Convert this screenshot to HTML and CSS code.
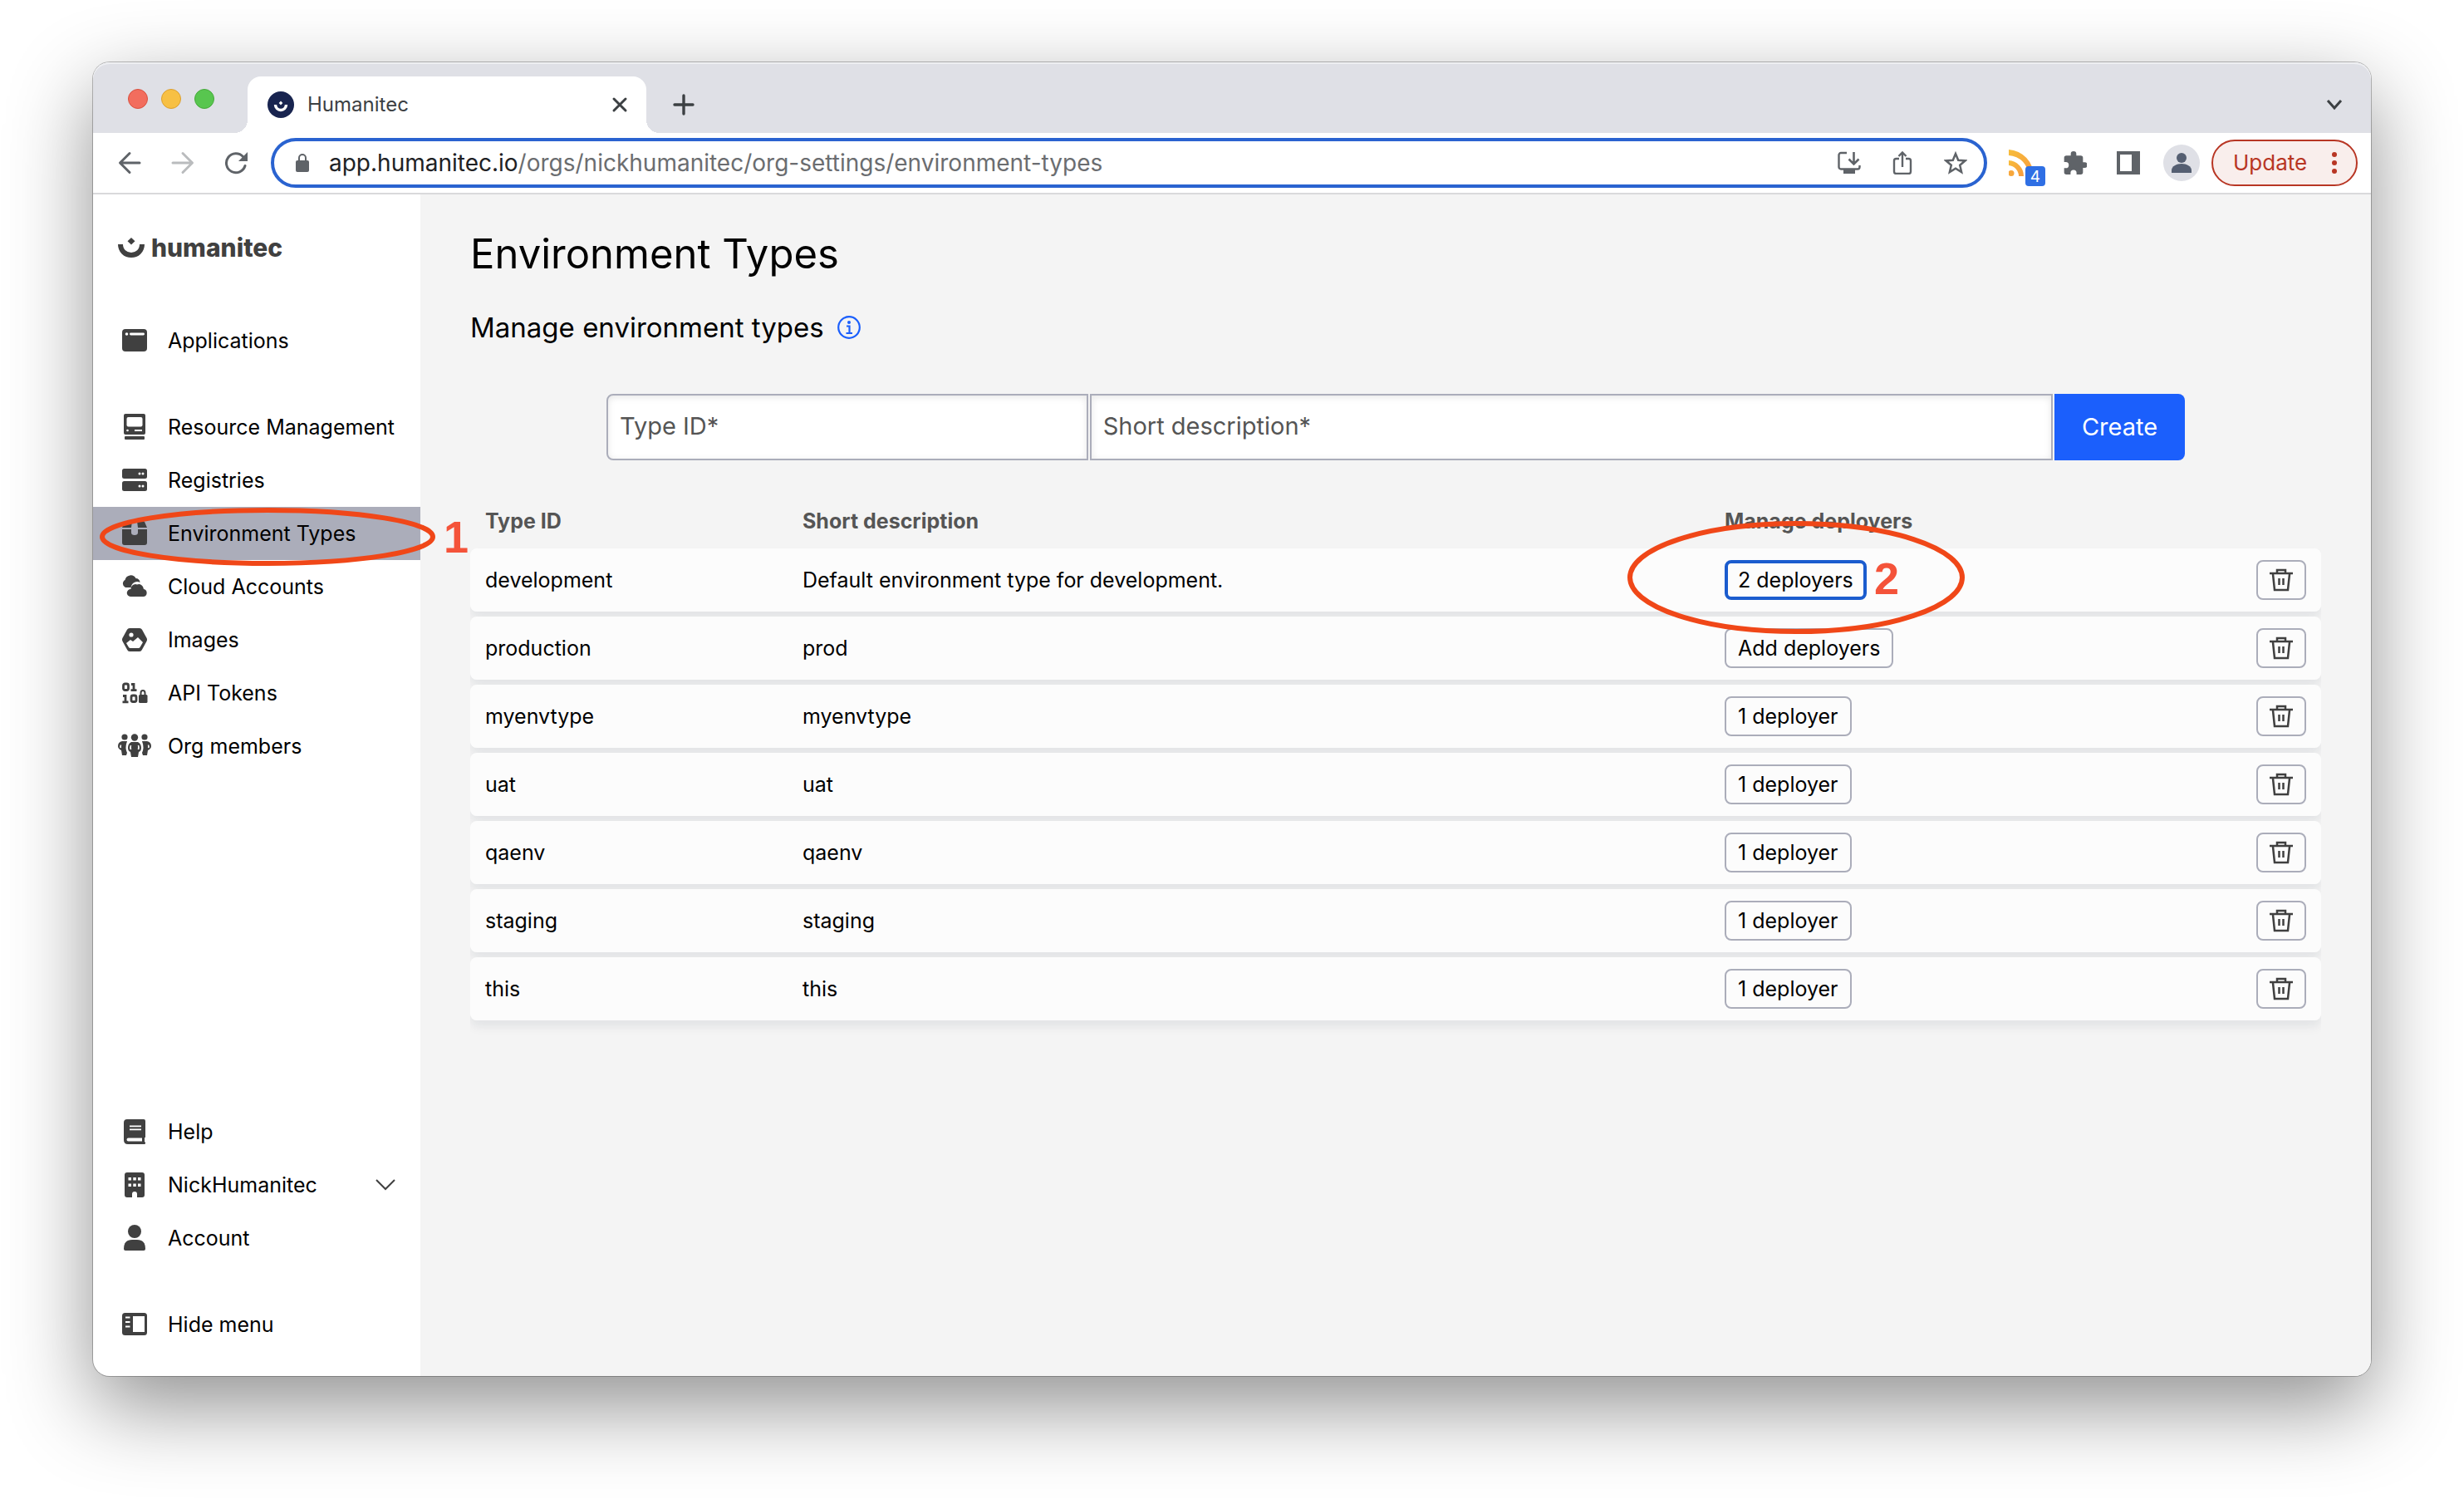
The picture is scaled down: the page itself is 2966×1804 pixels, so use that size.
FILE: index.html
```html
<!DOCTYPE html>
<html lang="en">
<head>
<meta charset="utf-8">
<title>Humanitec</title>
<link rel="stylesheet" href="styles.css">
</head>
<body>
<svg class="sprite" aria-hidden="true">
  <symbol id="trash" viewBox="0 0 28 28"><path d="M0 6h28M9 6V2h10v4M4 7l2 19h16l2-19M11.500 12v8M16.500 12v8" fill="none" stroke="#404040" stroke-width="2.500"/></symbol>
</svg>
<div class="window">
  <header class="tabstrip">
    <div class="lights">
      <button class="light close" aria-label="Close window"></button>
      <button class="light minimise" aria-label="Minimise window"></button>
      <button class="light zoom" aria-label="Zoom window"></button>
    </div>
    <div class="tab">
      <svg class="favicon" viewBox="0 0 32 32"><circle cx="16" cy="16" r="16" fill="#18244f"/><path d="M9.500 16a6.500 6.500 0 0 0 13 0" fill="none" stroke="#fff" stroke-width="3.400"/><path d="M16 11.500l2.300 2.500-2.300 2.500-2.300-2.500z" fill="#fff"/></svg>
      <span class="tab-title">Humanitec</span>
      <button class="icon-btn" aria-label="Close tab"><svg width="20" height="20" viewBox="0 0 20 20"><path d="M3 3l14 14M17 3L3 17" stroke="#3c4043" stroke-width="3" stroke-linecap="round"/></svg></button>
    </div>
    <button class="icon-btn new-tab" aria-label="New tab"><svg width="26" height="26" viewBox="0 0 26 26"><path d="M13 2v22M2 13h22" stroke="#3c4043" stroke-width="3.400" stroke-linecap="round"/></svg></button>
    <button class="icon-btn tab-search" aria-label="Search tabs"><svg width="20" height="20" viewBox="0 0 20 20"><path d="M2 5l8 9 8-9" fill="none" stroke="#3c4043" stroke-width="3"/></svg></button>
  </header>

  <div class="toolbar">
    <div class="history">
      <button class="icon-btn" aria-label="Back"><svg width="28" height="28" viewBox="0 0 28 28"><path d="M26 14H3M14 2.500L2.500 14 14 25.500" fill="none" stroke="#5f6368" stroke-width="3" stroke-linecap="round" stroke-linejoin="round"/></svg></button>
      <button class="icon-btn" aria-label="Forward" disabled><svg width="28" height="28" viewBox="0 0 28 28"><path d="M2 14h23M14 2.500L25.500 14 14 25.500" fill="none" stroke="#babcbe" stroke-width="3" stroke-linecap="round" stroke-linejoin="round"/></svg></button>
      <button class="icon-btn" aria-label="Reload"><svg width="28" height="28" viewBox="0 0 28 28"><path d="M25 17.500A11.500 11.500 0 1 1 22.500 6.500" fill="none" stroke="#5f6368" stroke-width="3" stroke-linecap="round"/><path d="M28 1v11H17z" fill="#5f6368"/></svg></button>
    </div>
    <div class="omnibox">
      <svg width="16" height="22" viewBox="0 0 16 22"><rect y="8" width="16" height="14" rx="2" fill="#5f6368"/><path d="M4 9V5a4 4 0 0 1 8 0v4" fill="none" stroke="#5f6368" stroke-width="2"/></svg>
      <div class="url" role="textbox" contenteditable="true" spellcheck="false" aria-label="Address"><span class="host">app.humanitec.io</span>/orgs/nickhumanitec/org-settings/environment-types</div>
      <button class="icon-btn" aria-label="Install app"><svg width="28" height="28" viewBox="0 0 28 28"><path d="M11 2H4a2.500 2.500 0 0 0-2.500 2.500V19A2.500 2.500 0 0 0 4 21.500h20a2.500 2.500 0 0 0 2.500-2.500v-2" fill="none" stroke="#5f6368" stroke-width="2.400"/><path d="M7 22h14v5H7z" fill="#5f6368"/><path d="M19.500 1v14M13.500 9.500l6 6 6-6" fill="none" stroke="#5f6368" stroke-width="2.600"/></svg></button>
      <button class="icon-btn" aria-label="Share"><svg width="28" height="28" viewBox="0 0 28 28"><path d="M10 9H6.500A2.500 2.500 0 0 0 4 11.500v13A2.500 2.500 0 0 0 6.500 27h15a2.500 2.500 0 0 0 2.500-2.500v-13A2.500 2.500 0 0 0 21.500 9H18M14 19V2M9.500 6L14 1.500 18.500 6" fill="none" stroke="#5f6368" stroke-width="2.400"/></svg></button>
      <button class="icon-btn" aria-label="Bookmark"><svg width="28" height="28" viewBox="0 0 28 28"><path d="M14 3l3.200 7.700 8.300.700-6.300 5.400 1.900 8.200-7.100-4.400L6.900 25l1.900-8.200-6.300-5.400 8.300-.7z" fill="none" stroke="#5f6368" stroke-width="2.500"/></svg></button>
    </div>
    <div class="extensions">
      <button class="icon-btn feed" aria-label="Feed reader"><svg width="30" height="32" viewBox="0 0 30 32"><defs><linearGradient id="rss" x1="0" y1="0" x2="1" y2="1"><stop offset="0" stop-color="#f7bd3b"/><stop offset="1" stop-color="#f79a3e"/></linearGradient></defs><path d="M0 0a32 32 0 0 1 30 32h-6A25 25 0 0 0 0 7z" fill="url(#rss)"/><path d="M0 13a19 19 0 0 1 18 19h-6A13 13 0 0 0 0 19z" fill="url(#rss)"/><circle cx="3" cy="28.500" r="3.500" fill="#f7a73c"/></svg><span class="badge">4</span></button>
      <button class="icon-btn" aria-label="Extensions"><svg width="28" height="28" viewBox="1.500 1 21 21"><path d="M20.500 11H19V7a2 2 0 0 0-2-2h-4V3.500a2.500 2.500 0 0 0-5 0V5H4a2 2 0 0 0-2 2v3.800h1.500a2.700 2.700 0 0 1 0 5.400H2V20a2 2 0 0 0 2 2h3.800v-1.500a2.700 2.700 0 0 1 5.400 0V22H17a2 2 0 0 0 2-2v-4h1.500a2.500 2.500 0 0 0 0-5z" fill="#5f6368"/></svg></button>
      <button class="icon-btn" aria-label="Side panel"><svg width="28" height="28" viewBox="0 0 28 28"><path d="M0 0h28v28H0zM4 4v20h14V4z" fill="#5f6368" fill-rule="evenodd"/></svg></button>
      <button class="icon-btn avatar" aria-label="Profile"><svg width="44" height="44" viewBox="0 0 44 44"><circle cx="22" cy="22" r="22" fill="#dfe0e6"/><circle cx="22" cy="16" r="6" fill="#555f72"/><path d="M10 34v-3c0-5 6-8 12-8s12 3 12 8v3z" fill="#555f72"/></svg></button>
      <button class="update">Update <svg width="8" height="28" viewBox="0 0 8 28"><g fill="#b83624"><circle cx="4" cy="4" r="3"/><circle cx="4" cy="14" r="3"/><circle cx="4" cy="24" r="3"/></g></svg></button>
    </div>
  </div>

  <div class="app">
    <nav class="sidebar" aria-label="Main">
      <a class="brand" href="#"><svg width="32" height="24" viewBox="0 0 32 24"><path d="M3 8c0 8 6 13 13 13s13-5 13-13" fill="none" stroke="#404040" stroke-width="6"/><path d="M16 0l4.500 4.300L16 8.600l-4.500-4.300z" fill="#404040"/></svg><span>humanitec</span></a>

      <a class="nav-item" href="#"><svg class="nav-icon" viewBox="0 0 40 32"><rect x="5" y="2" width="30" height="27" rx="4"/><circle cx="10.500" cy="8" r="1.800" fill="#fff"/><rect x="14" y="6.600" width="18" height="2.800" rx="1.400" fill="#fff"/></svg>Applications</a>

      <div class="nav-group">
        <a class="nav-item" href="#"><svg class="nav-icon" viewBox="0 0 40 32"><rect x="7" y="0" width="26" height="25" rx="2"/><rect x="10.500" y="4" width="19" height="11.500" rx="2" fill="#fff"/><circle cx="11.500" cy="20" r="1.300" fill="#fff"/><path d="M20 19h9v2h-9z" fill="#fff"/><rect x="8" y="27" width="24" height="4" rx="1"/></svg>Resource Management</a>
        <a class="nav-item" href="#"><svg class="nav-icon" viewBox="0 0 40 32"><rect x="5" y="2" width="30" height="12" rx="2.500"/><rect x="5" y="17" width="30" height="12" rx="2.500"/><g fill="#fff"><circle cx="26" cy="8" r="1.500"/><circle cx="30" cy="8" r="1.500"/><circle cx="26" cy="23" r="1.500"/><circle cx="30" cy="23" r="1.500"/></g></svg>Registries</a>
        <a class="nav-item active" href="#" aria-current="page"><svg class="nav-icon" viewBox="0 0 40 32"><path d="M10 1h7l-1 8H5l3-7zM30 1h-7l1 8h11l-3-7zM5 11h11v4q0 3 4 3t4-3v-4h11v16q0 3-3 3H8q-3 0-3-3z"/></svg>Environment Types
          <svg class="ring ring-nav" viewBox="0 0 404 70"><ellipse cx="202" cy="35" rx="199" ry="32"/></svg><span class="step step-nav">1</span></a>
        <a class="nav-item" href="#"><svg class="nav-icon" viewBox="0 0 40 32"><path d="M9 17a5 5 0 0 1-.5-9 7 7 0 0 1 13-2 5 5 0 0 1 5 5q-3-2-7 0-3 1.500-4 6z"/><path d="M15 28a4.500 4.500 0 0 1 .5-9A5.500 5.500 0 0 1 23 13.500 6 6 0 0 1 31 19a4.600 4.600 0 0 1 0 9z"/></svg>Cloud Accounts</a>
        <a class="nav-item" href="#"><svg class="nav-icon" viewBox="0 0 40 32"><path d="M14 2h12q2 0 3 1.800l5.500 10q1 2 0 4l-5.500 10Q28 30 26 30H14q-2 0-3-2.200l-5.500-10q-1-2 0-4l5.500-10Q12 2 14 2z"/><circle cx="16" cy="10" r="2.600" fill="#fff"/><path d="M10 20l5-4 3 2 6-5 6 6-3.500 6q-.5 1-2 1H15q-1.500 0-2-1z" fill="#fff"/></svg>Images</a>
        <a class="nav-item" href="#"><svg class="nav-icon" viewBox="0 0 40 32"><g fill="none" stroke="#404040" stroke-width="2.800"><rect x="6.500" y="5" width="6" height="7.500" rx="2"/><path d="M16 5.500h3v7M15.500 12.700h7M6 19.500h3v7M5.500 26.800h7"/><rect x="16" y="19" width="6" height="7.500" rx="2"/><path d="M27.500 20v-4q0-3 2.500-3t2.500 3v4" stroke-width="2"/></g><rect x="25" y="18" width="10.500" height="10" rx="1.500"/></svg>API Tokens</a>
        <a class="nav-item" href="#"><svg class="nav-icon" viewBox="0 0 40 32"><circle cx="8" cy="5" r="3.600"/><circle cx="32" cy="5" r="3.600"/><circle cx="20" cy="5.500" r="4.200"/><path d="M5 10h6q-3 8 0 14l-1 3H5l-1-6q-4-2-4-5 0-5 5-6zM35 10h-6q3 8 0 14l1 3h5l1-6q4-2 4-5 0-5-5-6zM16 11h8q4 2 4 7 0 4-3 5l-1 6h-8l-1-6q-3-1-3-5 0-5 4-7z"/><path d="M3.500 14.500q-1 2 0 3.500M36.500 14.500q1 2 0 3.500M15.500 15q-1 2.500 0 5M24.500 15q1 2.500 0 5" fill="none" stroke="#fff" stroke-width="1.600"/></svg>Org members</a>
      </div>

      <div class="nav-bottom">
        <a class="nav-item" href="#"><svg class="nav-icon" viewBox="0 0 40 32"><path d="M11 1h20q2 0 2 2v20h-1v5q1 0 1 1.500T32 31H12q-5 0-5-5V5q0-4 4-4z"/><path d="M14 8.500h14v1.800H14zM14 12.500h14v1.800H14zM12.500 23.500H29v4H12.500q-2 0-2-2t2-2z" fill="#fff"/></svg>Help</a>
        <button class="nav-item" aria-expanded="false"><svg class="nav-icon" viewBox="0 0 40 32"><rect x="8" y="1" width="24" height="30" rx="3"/><path d="M12.500 7h3.500v3.500h-3.500zM18.300 7h3.500v3.500h-3.500zM24 7h3.500v3.500H24zM12.500 14.500h3.500V18h-3.500zM18.300 14.500h3.500V18h-3.500zM24 14.500h3.500V18H24zM17 31v-4q0-3 3-3t3 3v4z" fill="#fff"/></svg>NickHumanitec
          <svg class="caret" width="24" height="16" viewBox="0 0 24 16"><path d="M1 2l11 11L23 2" fill="none" stroke="#404040" stroke-width="2"/></svg></button>
        <a class="nav-item" href="#"><svg class="nav-icon" viewBox="0 0 40 32"><circle cx="20" cy="8" r="8"/><path d="M7 29q0-11 10-11h6q10 0 10 11 0 2-2 2H9q-2 0-2-2z"/></svg>Account</a>
      </div>
      <button class="nav-item hide-menu"><svg class="nav-icon" viewBox="0 0 40 32"><rect x="5" y="2" width="30" height="27" rx="3.500"/><path d="M18 6h14v19H18zM9 6.500h5.500v2H9zM9 12h5.500v2H9zM9 17.500h5.500v2H9z" fill="#fff"/></svg>Hide menu</button>
    </nav>

    <main class="main">
      <h1>Environment Types</h1>
      <h2>Manage environment types <svg width="28" height="28" viewBox="0 0 28 28"><g fill="none" stroke="#1b5ffc"><circle cx="14" cy="14" r="12.800" stroke-width="2.200"/><path d="M11 12.500h3.500V21M10.500 21h7.500" stroke-width="2.200"/></g><circle cx="14" cy="8" r="2" fill="#1b5ffc"/></svg></h2>
      <form class="create">
        <input class="field first" type="text" placeholder="Type ID*" aria-label="Type ID">
        <input class="field" type="text" placeholder="Short description*" aria-label="Short description">
        <button class="submit" type="button">Create</button>
      </form>
      <div class="table-wrap">
      <table>
        <colgroup><col class="c-id"><col><col class="c-deployers"><col class="c-actions"></colgroup>
        <thead><tr><th scope="col">Type ID</th><th scope="col">Short description</th><th scope="col">Manage deployers</th><td></td></tr></thead>
        <tbody>
          <tr><td>development</td><td>Default environment type for development.</td><td class="marked"><button class="chip focused">2 deployers</button><svg class="ring ring-cell" viewBox="0 0 406 136"><ellipse cx="203" cy="68" rx="200" ry="65"/></svg><span class="step step-cell">2</span></td><td><button class="chip del" aria-label="Delete development"><svg><use href="#trash"/></svg></button></td></tr>
          <tr><td>production</td><td>prod</td><td><button class="chip">Add deployers</button></td><td><button class="chip del" aria-label="Delete production"><svg><use href="#trash"/></svg></button></td></tr>
          <tr><td>myenvtype</td><td>myenvtype</td><td><button class="chip">1 deployer</button></td><td><button class="chip del" aria-label="Delete myenvtype"><svg><use href="#trash"/></svg></button></td></tr>
          <tr><td>uat</td><td>uat</td><td><button class="chip">1 deployer</button></td><td><button class="chip del" aria-label="Delete uat"><svg><use href="#trash"/></svg></button></td></tr>
          <tr><td>qaenv</td><td>qaenv</td><td><button class="chip">1 deployer</button></td><td><button class="chip del" aria-label="Delete qaenv"><svg><use href="#trash"/></svg></button></td></tr>
          <tr><td>staging</td><td>staging</td><td><button class="chip">1 deployer</button></td><td><button class="chip del" aria-label="Delete staging"><svg><use href="#trash"/></svg></button></td></tr>
          <tr><td>this</td><td>this</td><td><button class="chip">1 deployer</button></td><td><button class="chip del" aria-label="Delete this"><svg><use href="#trash"/></svg></button></td></tr>
        </tbody>
      </table>
      </div>
    </main>
  </div>
</div>
</body>
</html>
```
FILE: styles.css
```css
* { box-sizing: border-box; }

body {
  margin: 0;
  min-height: 100vh;
  display: flex;
  padding: 75px 112px 148px;
  background: #fff;
  color: #000;
  font: 25px/32px Inter, "Liberation Sans", sans-serif;
}

button, input { font: inherit; color: inherit; }
svg { display: block; flex: none; }
.sprite { position: absolute; width: 0; height: 0; }

.icon-btn {
  display: flex;
  padding: 0;
  border: 0;
  background: none;
}

/* Browser window */
.window {
  flex: 1;
  display: flex;
  flex-direction: column;
  min-width: 0;
  border-radius: 20px;
  background: #fff;
  box-shadow: 0 0 0 1px rgba(0, 0, 0, .25), 0 36px 100px rgba(0, 0, 0, .44);
}

.tabstrip {
  display: flex;
  align-items: flex-end;
  height: 85px;
  padding: 0 34px 0 42px;
  border-radius: 20px 20px 0 0;
  background: #dfe0e6;
  box-shadow: inset 0 2px 0 #eeeff2;
}
.lights {
  display: flex;
  align-items: center;
  gap: 16px;
  height: 82px;
  margin-right: 40px;
}
.light {
  width: 24px;
  height: 24px;
  padding: 0;
  border: 1px solid;
  border-radius: 50%;
}
.light.close { background: #f26d5e; border-color: #d9503f; }
.light.minimise { background: #f7c044; border-color: #dc9f2e; }
.light.zoom { background: #58c64f; border-color: #45a93a; }

.tab {
  position: relative;
  display: flex;
  align-items: center;
  gap: 16px;
  width: 480px;
  height: 68px;
  padding: 0 22px 0 24px;
  border-radius: 16px 16px 0 0;
  background: #fff;
}
.tab::before, .tab::after {
  content: "";
  position: absolute;
  bottom: 0;
  width: 16px;
  height: 16px;
}
.tab::before { left: -16px; background: radial-gradient(circle at 0 0, transparent 16px, #fff 16px); }
.tab::after { right: -16px; background: radial-gradient(circle at 100% 0, transparent 16px, #fff 16px); }
.favicon { width: 32px; height: 32px; }
.tab-title { flex: 1; font-size: 24px; color: #3c4043; }
.new-tab, .tab-search { height: 68px; align-items: center; }
.new-tab { margin-left: 32px; }
.tab-search { margin-left: auto; }

.toolbar {
  display: flex;
  align-items: center;
  height: 74px;
  padding: 0 16px 0 30px;
  border-bottom: 2px solid #d9d9db;
}
.history { display: flex; gap: 36px; margin-right: 28px; }
.omnibox {
  flex: 1;
  display: flex;
  align-items: center;
  gap: 36px;
  height: 60px;
  padding: 0 20px 0 26px;
  border: 4px solid #2a63d0;
  border-radius: 30px;
}
.url {
  flex: 1;
  margin-left: -12px;
  font-size: 28px;
  color: #6b6d70;
  white-space: nowrap;
}
.host { color: #202124; }
.extensions { display: flex; align-items: center; gap: 36px; margin-left: 26px; }
.feed { position: relative; }
.badge {
  position: absolute;
  left: 20px;
  top: 20px;
  width: 24px;
  height: 24px;
  border-radius: 4px;
  background: #2f6fe4;
  color: #fff;
  font-size: 19px;
  line-height: 25px;
  text-align: center;
}
.avatar { margin: 0 -22px 0 -8px; }
.update {
  display: flex;
  align-items: center;
  justify-content: space-between;
  width: 176px;
  height: 56px;
  padding: 0 22px 0 24px;
  border: 2px solid #b83624;
  border-radius: 28px;
  background: #f9eeec;
  color: #b83624;
  font-size: 26px;
}

/* Application */
.app { flex: 1; display: flex; }

.sidebar {
  position: relative;
  z-index: 1;
  display: flex;
  flex-direction: column;
  width: 394px;
  padding-bottom: 30px;
}
.brand {
  display: flex;
  align-items: center;
  gap: 8px;
  height: 128px;
  margin-bottom: 16px;
  padding-left: 30px;
  color: #404040;
  font-size: 30px;
  font-weight: 800;
  text-decoration: none;
}
.nav-item {
  position: relative;
  display: flex;
  align-items: center;
  gap: 20px;
  width: 100%;
  height: 64px;
  padding: 0 30px;
  border: 0;
  background: none;
  color: #000;
  text-align: left;
  text-decoration: none;
  white-space: nowrap;
}
.nav-item.active { background: #abadba; }
.nav-icon { width: 40px; height: 32px; fill: #404040; }
.nav-group { margin-top: 40px; }
.nav-bottom { margin-top: auto; }
.hide-menu { margin-top: 40px; }
.caret { margin-left: auto; }

.main {
  flex: 1;
  min-width: 0;
  padding: 42px 60px;
  border-radius: 0 0 20px 0;
  background: #f4f4f4;
}
h1 { margin: 0; font-size: 49px; line-height: 60px; font-weight: 400; }
h2 {
  display: flex;
  align-items: center;
  gap: 16px;
  margin: 38px 0 60px;
  font-size: 33px;
  line-height: 40px;
  font-weight: 400;
}

.create {
  display: grid;
  grid-template-columns: 1fr 2fr 157px;
  gap: 2px;
  height: 80px;
  padding: 0 164px;
  font-size: 29px;
}
.field {
  min-width: 0;
  padding: 0 14px 2px;
  border: 2px solid #abadba;
  border-radius: 0;
  background: #fff;
  box-shadow: inset 0 2px 8px rgba(0, 0, 0, .1);
}
.field.first { border-radius: 8px 0 0 8px; }
.field::placeholder { color: #555; opacity: 1; }
.submit {
  padding: 0;
  border: 0;
  border-radius: 0 8px 8px 0;
  background: #1b5ffc;
  color: #fff;
}

.table-wrap { margin-top: 40px; padding-bottom: 24px; clip-path: inset(0); }
table {
  width: 100%;
  table-layout: fixed;
  border-collapse: separate;
  border-spacing: 0 6px;
}
.c-id { width: 382px; }
.c-deployers { width: 640px; }
.c-actions { width: 96px; }
th { height: 54px; padding: 0 18px; color: #555; font-weight: 700; text-align: left; }
thead td { padding: 0; }
tbody tr { border-radius: 8px; box-shadow: 0 8px 12px rgba(20, 35, 50, .07); }
tbody td { height: 76px; padding: 0 18px; background: #fcfcfc; }
tbody td:first-child { border-radius: 8px 0 0 8px; }
tbody td:last-child { border-radius: 0 8px 8px 0; }

.chip {
  display: flex;
  align-items: center;
  justify-content: center;
  height: 48px;
  padding: 0 14px;
  border: 2px solid #abadba;
  border-radius: 8px;
  background: #fcfcfc;
}
.chip.focused { padding: 0 12px; border: 4px solid #1b5cce; }
.del { width: 60px; padding: 0; }
.del svg { width: 28px; height: 28px; }

/* Numbered walkthrough marks */
.marked { position: relative; }
.ring {
  position: absolute;
  z-index: 2;
  fill: none;
  stroke: #f04718;
  stroke-width: 6px;
  pointer-events: none;
}
.ring-nav { left: 8px; top: 1px; width: 404px; height: 70px; }
.ring-cell { left: -99px; top: -33px; width: 406px; height: 136px; }
.step {
  position: absolute;
  top: 4px;
  color: #f4533a;
  font: 700 54px/64px "Liberation Sans", Arial, sans-serif;
}
.step-nav { left: 422px; }
.step-cell { left: 198px; }
```
